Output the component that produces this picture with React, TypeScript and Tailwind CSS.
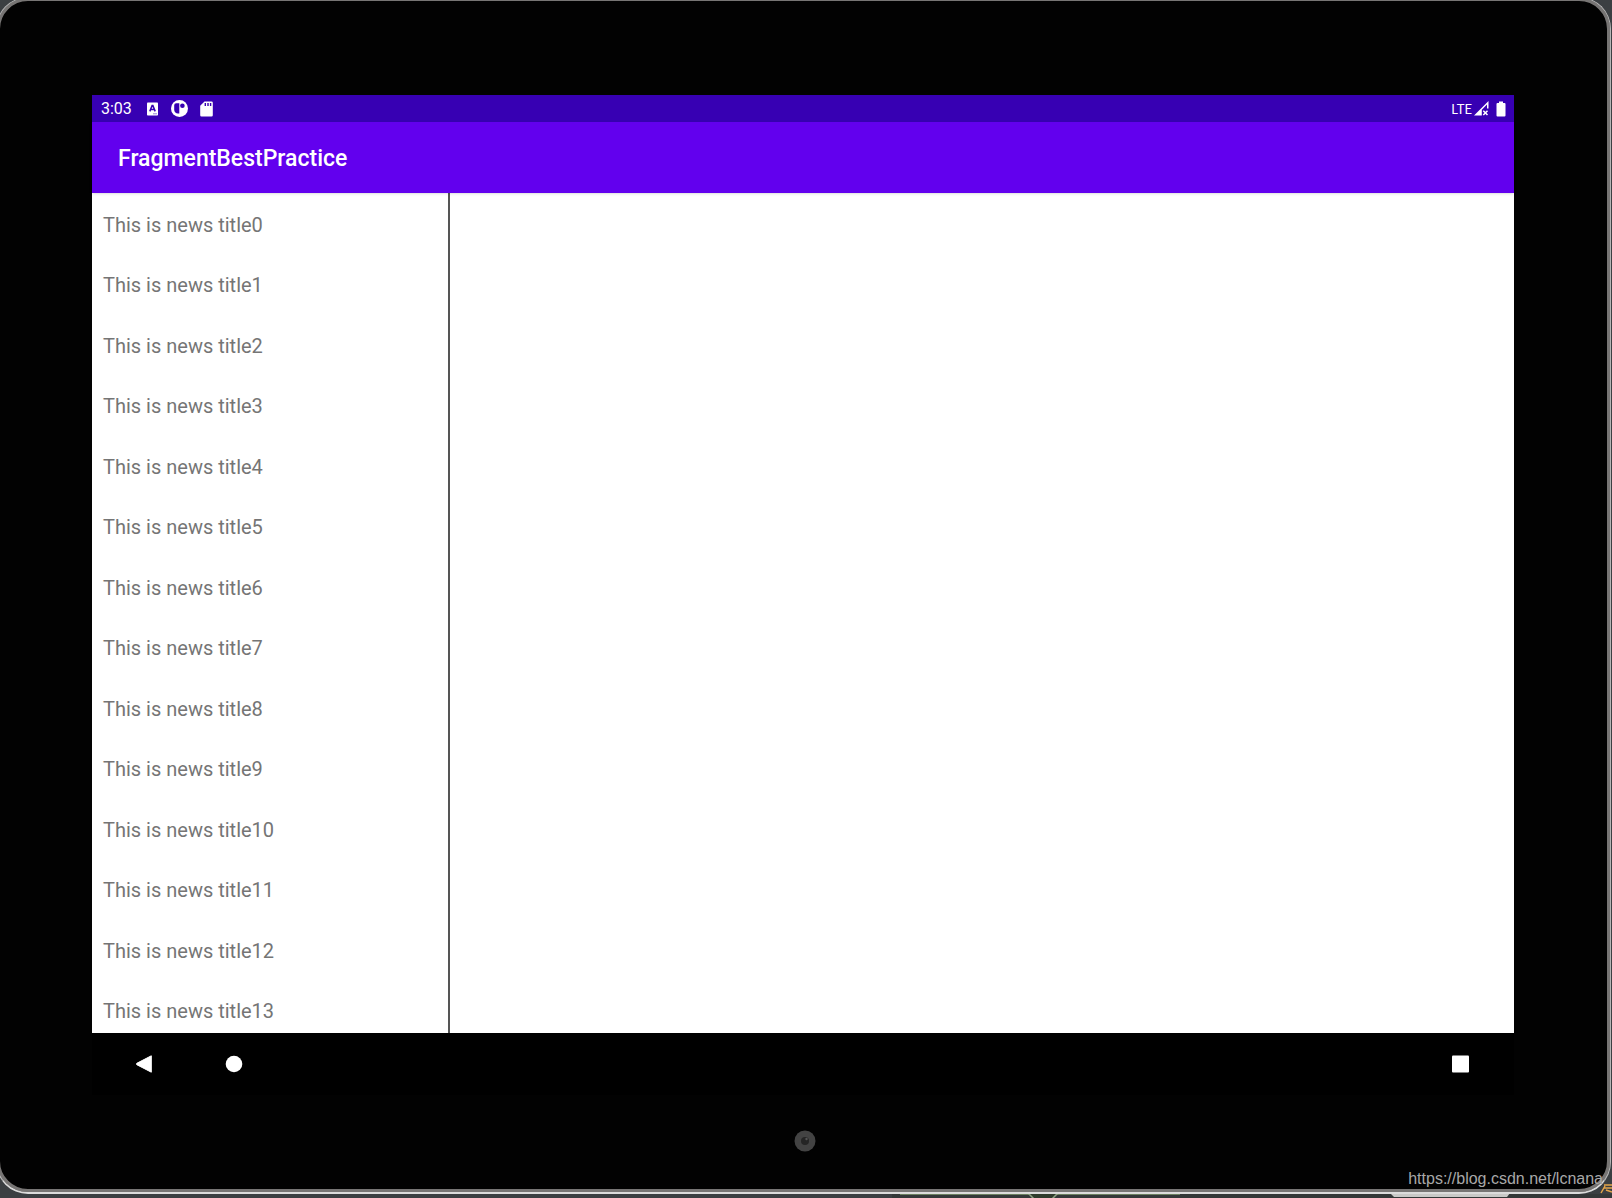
import React from 'react'

const titles = Array.from({ length: 14 }, (_, i) => `This is news title${i}`)

function StatusBar() {
  return (
    <div className="flex h-[27px] shrink-0 items-center justify-between bg-[#3700b3] pl-[9px] pr-2 text-white">
      <div className="flex items-center gap-3">
        <span className="mr-[2px] text-base leading-6">3:03</span>
        {/* keyboard */}
        <svg width="13" height="14" viewBox="0 0 13 14">
          <rect x="1" y="0.5" width="11" height="13" rx="0.8" fill="white" />
          <path d="M3.800 9.400 6.100 3.600h.8L9.200 9.400M4.800 7.500h3.400" fill="none" stroke="#3700b3" strokeWidth="1.500" />
          <path d="M7 11.800h4" stroke="#9a80d9" strokeWidth="1" />
        </svg>
        {/* app badge */}
        <svg width="17" height="17" viewBox="0 0 17 17">
          <circle cx="8.500" cy="8.500" r="8.500" fill="white" />
          <path d="M8.300 3.200v10.300H7A4 4 0 0 1 3.200 10V5.200a2 2 0 0 1 2-2z" fill="#3700b3" />
          <circle cx="11.400" cy="5.800" r="2.300" fill="#3700b3" />
        </svg>
        {/* sd card */}
        <svg width="13" height="16" viewBox="0 0 13 16">
          <path d="M4.500.5h7A1.300 1.300 0 0 1 12.800 1.800v12.400a1.300 1.300 0 0 1-1.300 1.300h-10A1.300 1.300 0 0 1 .2 14.200V4.800z" fill="white" />
          <path d="M5.300 2v3M8 2v3M10.600 2v3" stroke="#3700b3" strokeWidth="1.400" />
        </svg>
      </div>
      <div className="flex items-center">
        <span className="font-['Lato',sans-serif] text-[13px] leading-6">LTE</span>
        <svg className="ml-[2px]" width="15" height="15" viewBox="0 0 15 15">
          <path d="M0 14.500 14.500 0v7.500h-1.500V3.600L7.800 8.800v5.700z" fill="white" />
          <path d="m9.300 9.800 4.200 4.200M13.500 9.800 9.300 14" stroke="white" strokeWidth="1.500" />
        </svg>
        <svg className="ml-[7px]" width="10" height="16" viewBox="0 0 10 16">
          <path d="M3 .5h4V2h1.500A1 1 0 0 1 9.500 3v11.500a1 1 0 0 1-1 1h-7a1 1 0 0 1-1-1V3a1 1 0 0 1 1-1H3z" fill="white" />
        </svg>
      </div>
    </div>
  )
}

function NavBar() {
  return (
    <nav className="flex h-[62px] shrink-0 items-center bg-black pl-[42px] pr-11">
      <button type="button" aria-label="Back">
        <svg width="20" height="20" viewBox="0 0 20 20">
          <path d="M17.300 1.800v16.400L2.800 10.700q-1-.7 0-1.400z" fill="white" stroke="white" strokeWidth="1" strokeLinejoin="round" />
        </svg>
      </button>
      <button type="button" aria-label="Home" className="ml-[70px]">
        <svg width="20" height="20" viewBox="0 0 20 20">
          <circle cx="10" cy="10" r="8.300" fill="white" />
        </svg>
      </button>
      <button type="button" aria-label="Overview" className="ml-auto">
        <svg width="20" height="20" viewBox="0 0 20 20">
          <rect x="2" y="1.500" width="17" height="17" rx="1" fill="white" />
        </svg>
      </button>
    </nav>
  )
}

export default function App() {
  return (
    <div className="relative flex h-screen flex-col overflow-hidden bg-[#3b3f42] font-['Roboto',sans-serif]">
      {/* what shows below the tablet */}
      <svg className="absolute bottom-0 right-0" width="720" height="30" viewBox="0 0 720 30">
        <path d="M0 26h720v4H0z" fill="#343838" />
        <path d="M8 26.500h280" stroke="#6b7f60" />
        <path d="m136 25 6 6h18l6-6" fill="#2f3b2c" stroke="#8da283" strokeWidth="1.500" />
        <path d="M498 25h120l-3 4H502z" fill="#c9c9c7" />
        <path d="M712 17h8M709 25l4-7M714 22l6 2M712 20h8" stroke="#e5a64b" strokeWidth="1.500" fill="none" />
      </svg>

      {/* tablet body */}
      <div className="relative -ml-1 -mt-[3px] mr-px mb-1 flex min-h-0 flex-1 flex-col rounded-[32px] border border-b-2 border-[#b4b4b4] border-b-[#dcdcdc] bg-[#777574]">
        <div className="flex min-h-0 flex-1 flex-col rounded-[31px] border-[3px] border-[#777574] bg-[#020202] pb-[94px] pl-[92px] pr-[93px] pt-[94px]">
          <main className="flex min-h-0 flex-1 flex-col bg-white">
            <StatusBar />
            <header className="relative flex h-[71px] shrink-0 items-center bg-[#6200ee] px-[26px] pt-0.5 shadow-sm">
              <h1 className="text-[23px] font-medium leading-7 text-white">FragmentBestPractice</h1>
            </header>
            <div className="flex min-h-0 flex-1">
              <ul className="w-1/4 overflow-hidden pt-px">
                {titles.map((title) => (
                  <li key={title} className="odd:h-[61px] even:h-[60px]">
                    <button type="button" className="h-full w-full px-[11px] text-left text-xl text-[#757575]">
                      {title}
                    </button>
                  </li>
                ))}
              </ul>
              <div className="flex-1 border-l-2 border-[#555]" />
            </div>
            <NavBar />
          </main>
        </div>
      </div>

      {/* front camera */}
      <svg className="absolute bottom-[46px] left-1/2 -ml-3" width="22" height="22" viewBox="0 0 22 22">
        <circle cx="11" cy="11" r="10.500" fill="#434343" />
        <circle cx="11" cy="11" r="4" fill="#252525" />
        <circle cx="12.500" cy="9" r="1.200" fill="#555" />
      </svg>
      <a href="https://blog.csdn.net/lcnana" className="absolute bottom-[7px] right-[9px] font-['Liberation_Sans',sans-serif] text-base text-[#a8a8a8]">
        https://blog.csdn.net/lcnana
      </a>
    </div>
  )
}
